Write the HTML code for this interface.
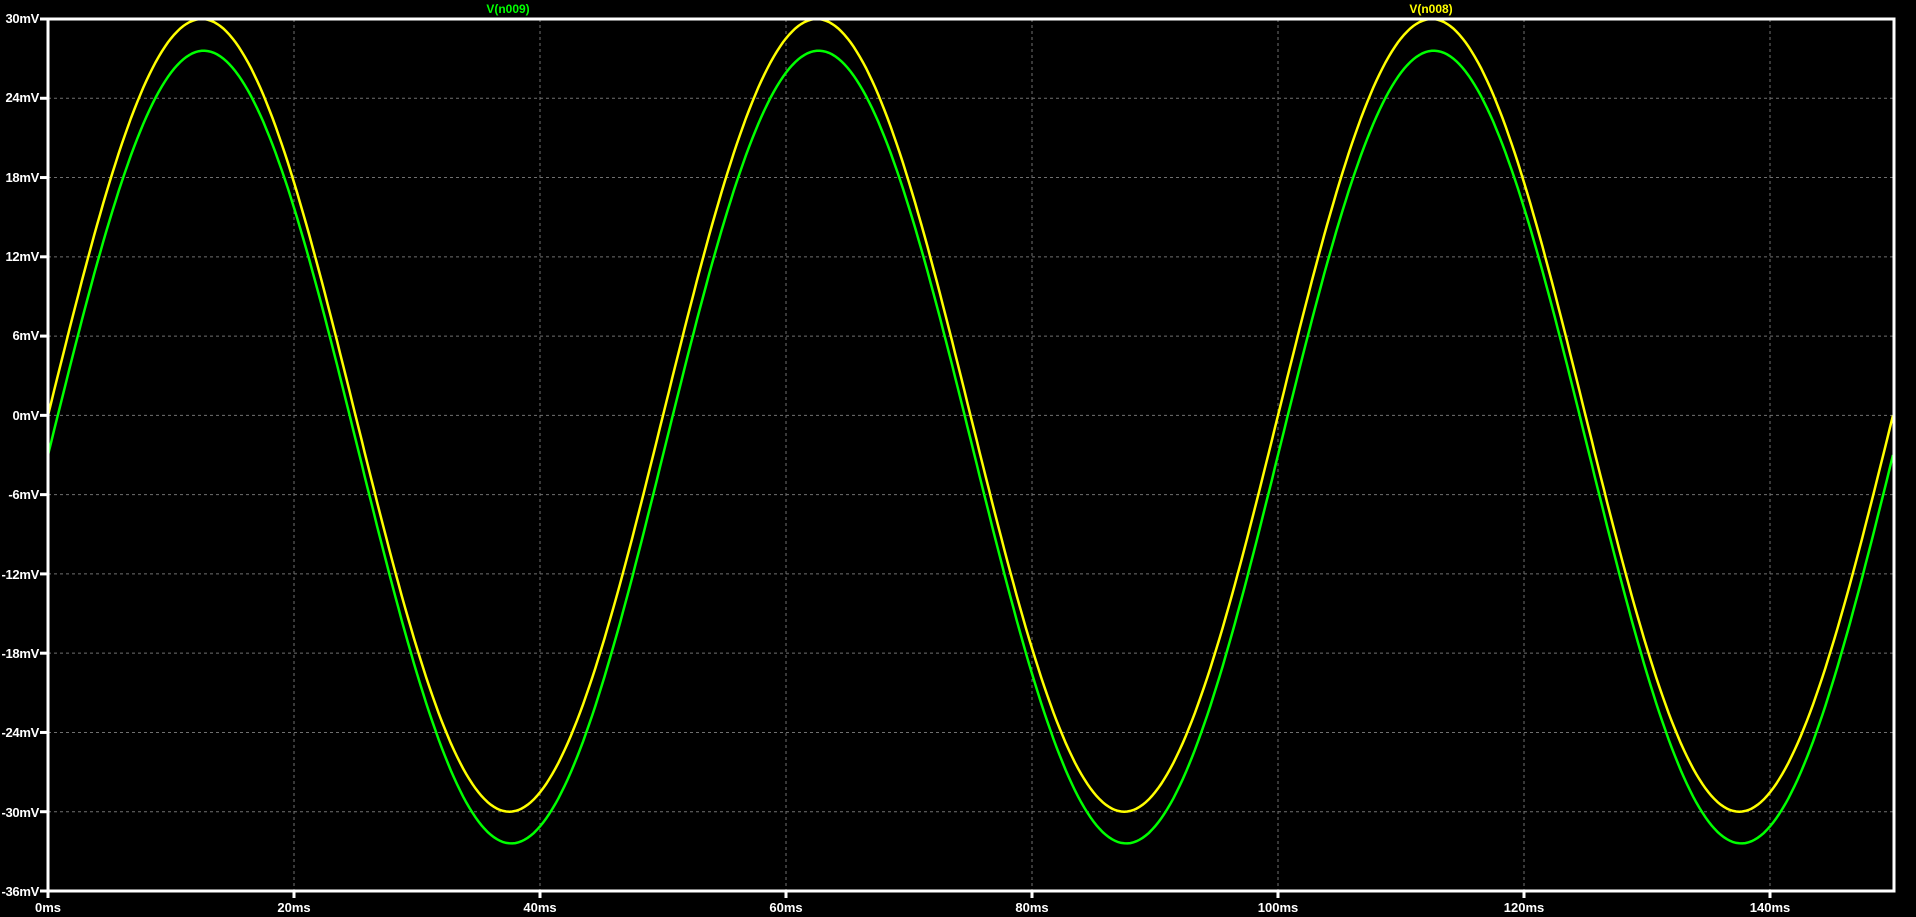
<!DOCTYPE html>
<html><head><meta charset="utf-8"><style>
html,body{margin:0;padding:0;background:#000;width:1916px;height:917px;overflow:hidden}
svg{display:block}
text{font-family:"Liberation Sans",sans-serif;font-weight:bold;fill:#fff}
</style></head><body>
<svg id="s" width="1916" height="917" xmlns="http://www.w3.org/2000/svg">
<g id="grid" stroke="#707070" stroke-width="1" stroke-dasharray="3,3"></g>
<path id="yel" fill="none" stroke="#ffff00" stroke-width="2.5"/>
<path id="grn" fill="none" stroke="#00ff00" stroke-width="2.5"/>
<rect x="48" y="19" width="1846" height="872" fill="none" stroke="#fff" stroke-width="3"/>
<g id="ticks" stroke="#fff" stroke-width="3"></g>
<g font-size="13" text-anchor="end" letter-spacing="-0.3">
<text x="39" y="23">30mV</text><text x="39" y="102">24mV</text><text x="39" y="182">18mV</text>
<text x="39" y="261">12mV</text><text x="39" y="340">6mV</text><text x="39" y="420">0mV</text>
<text x="39" y="499">-6mV</text><text x="39" y="579">-12mV</text><text x="39" y="658">-18mV</text>
<text x="39" y="737">-24mV</text><text x="39" y="817">-30mV</text><text x="39" y="896">-36mV</text>
</g>
<g font-size="13" text-anchor="middle">
<text x="48" y="912">0ms</text><text x="294" y="912">20ms</text><text x="540" y="912">40ms</text>
<text x="786" y="912">60ms</text><text x="1032" y="912">80ms</text><text x="1278" y="912">100ms</text>
<text x="1524" y="912">120ms</text><text x="1770" y="912">140ms</text>
</g>
<text x="508" y="13" font-size="12" text-anchor="middle" style="fill:#00ff00">V(n009)</text>
<text x="1431" y="13" font-size="12" text-anchor="middle" style="fill:#ffff00">V(n008)</text>
</svg>
<script>
var X=function(t){return 48+t*12.3},Y=function(v){return 19+(30-v)*13.212};
var g=document.getElementById('grid'),tk=document.getElementById('ticks'),h='',k='';
for(var i=1;i<8;i++){var x=X(i*20);h+='<line x1="'+x+'" y1="19" x2="'+x+'" y2="891"/>';k+='<line x1="'+x+'" y1="891" x2="'+x+'" y2="898"/>';}
for(var j=1;j<11;j++){var y=Y(30-j*6);h+='<line x1="48" y1="'+y+'" x2="1894" y2="'+y+'"/>';}
for(var j=0;j<12;j++){var y=Y(30-j*6);k+='<line x1="40" y1="'+y+'" x2="48" y2="'+y+'"/>';}
k+='<line x1="48" y1="891" x2="48" y2="898"/>';
g.innerHTML=h;tk.innerHTML=k;
var a='',b='';
for(var t=0;t<=150.001;t+=0.25){var p=2*Math.PI*t/50;
a+=(t?'L':'M')+X(t).toFixed(1)+' '+Y(30*Math.sin(p)).toFixed(1);
b+=(t?'L':'M')+X(t).toFixed(1)+' '+Y(30*Math.sin(p-0.02)-2.4).toFixed(1);}
document.getElementById('yel').setAttribute('d',a);
document.getElementById('grn').setAttribute('d',b);
</script>
</body></html>
